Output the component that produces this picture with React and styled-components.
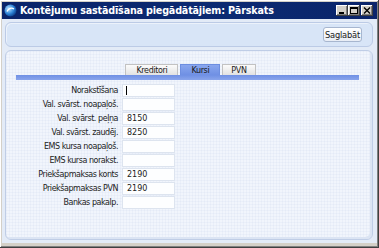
import React from "react";
import styled, { createGlobalStyle } from "styled-components";

const GlobalStyle = createGlobalStyle`
  html, body {
    margin: 0;
    padding: 0;
    background: #d4d0c8;
  }
  * {
    box-sizing: border-box;
  }
`;

const Window = styled.div`
  width: 379px;
  height: 248px;
  display: flex;
  flex-direction: column;
  background: #d4d0c8;
  padding: 2px 2px 5px 2px;
  box-shadow: inset -1px -1px 0 #404040, inset 1px 1px 0 #ffffff,
    inset -2px -2px 0 #808080;
  font-family: "DejaVu Sans", Tahoma, sans-serif;
`;

const TitleBar = styled.div`
  height: 17px;
  display: flex;
  align-items: center;
  padding: 0 2px 0 2px;
  background: linear-gradient(90deg, #0a246a 0%, #0c2a72 60%, #0a246a 100%);
  color: #ffffff;
`;

const TitleText = styled.span`
  flex: 1;
  margin-left: 3px;
  font-family: "DejaVu Sans", Tahoma, sans-serif;
  font-weight: bold;
  font-size: 9.6px;
  letter-spacing: -0.18px;
  white-space: nowrap;
`;

const Controls = styled.div`
  display: flex;
  margin-right: 2px;
`;

const CtrlButton = styled.div`
  width: 12px;
  height: 11px;
  margin-left: ${(p) => (p.$gap ? "1px" : "0")};
  background: #d4d0c8;
  box-shadow: inset -1px -1px 0 #404040, inset 1px 1px 0 #ffffff,
    inset -2px -2px 0 #808080;
  display: flex;
  align-items: center;
  justify-content: center;
`;

const Body = styled.div`
  flex: 1;
  display: flex;
  flex-direction: column;
  gap: 3px;
  padding: 3px 4px 3px 3px;
  background: #e3ebf7;
`;

const TopPanel = styled.div`
  height: 25px;
  display: flex;
  align-items: center;
  justify-content: flex-end;
  padding-right: 10px;
  border: 1px solid #bccbe6;
  border-radius: 6px;
  background: #d8e5f7;
  box-shadow: inset 1px 1px 0 #ecf2fb;
`;

const SaveButton = styled.button`
  width: 39px;
  height: 15px;
  padding: 0;
  border: 1px solid #a7b6cf;
  border-radius: 3px;
  background: linear-gradient(#ffffff, #e8edf5);
  color: #1a1a1a;
  font-family: "DejaVu Sans", Tahoma, sans-serif;
  font-size: 8.3px;
  letter-spacing: -0.2px;
`;

const MainPanel = styled.div`
  flex: 1;
  display: flex;
  flex-direction: column;
  border: 1px solid #bfcde6;
  border-radius: 6px;
  background-color: #f1f5fc;
  background-image: linear-gradient(rgba(200, 212, 235, 0.18) 1px, transparent 1px),
    linear-gradient(90deg, rgba(200, 212, 235, 0.18) 1px, transparent 1px);
  background-size: 3px 3px;
  box-shadow: inset -2px -2px 0 #dbe4f3;
  padding-top: 13px;
`;

const TabStrip = styled.div`
  display: flex;
  justify-content: center;
  gap: 2px;
  padding-left: 3px;
`;

const Tab = styled.div`
  height: 11px;
  padding: 0 ${(p) => p.$pad}px;
  display: flex;
  align-items: center;
  font-family: "DejaVu Sans", Tahoma, sans-serif;
  font-size: 8px;
  letter-spacing: -0.35px;
  color: #1a1a1a;
  border: 1px solid ${(p) => (p.$active ? "#6d8ee0" : "#c2c2c2")};
  border-bottom: none;
  background: ${(p) =>
    p.$active
      ? "linear-gradient(#89a6ee, #6f90e4)"
      : "linear-gradient(#fbfbfb, #e2e2e2)"};
`;

const TabLine = styled.div`
  height: 5px;
  margin: 0 13px 0 10px;
  background: linear-gradient(#6f90e4, #8aa5ec);
`;

const Form = styled.div`
  display: grid;
  grid-template-columns: 112px 53px;
  column-gap: 4px;
  row-gap: 1px;
  margin-top: 4px;
`;

const Label = styled.div`
  height: 13px;
  line-height: 13px;
  text-align: right;
  font-family: "DejaVu Sans", Tahoma, sans-serif;
  font-size: 8px;
  letter-spacing: -0.45px;
  color: #222222;
  white-space: nowrap;
`;

const Field = styled.div`
  height: 13px;
  line-height: 12px;
  padding-left: 4px;
  border: 1px solid #dde4ef;
  background: #fdfeff;
  font-family: "DejaVu Sans", Tahoma, sans-serif;
  font-size: 8px;
  color: #222222;
  display: flex;
  align-items: center;
`;

const Caret = styled.span`
  width: 1px;
  height: 9px;
  background: #000000;
  margin-left: -1px;
`;

const rows = [
  ["Norakstīšana", "", true],
  ["Val. svārst. noapaļoš.", ""],
  ["Val. svārst. peļņa", "8150"],
  ["Val. svārst. zaudēj.", "8250"],
  ["EMS kursa noapaļoš.", ""],
  ["EMS kursa norakst.", ""],
  ["Priekšapmaksas konts", "2190"],
  ["Priekšapmaksas PVN", "2190"],
  ["Bankas pakalp.", ""],
];

function AppIcon() {
  return (
    <svg width="13" height="13" viewBox="0 0 13 13">
      <defs>
        <radialGradient id="ig" cx="0.35" cy="0.35" r="0.7">
          <stop offset="0" stopColor="#bfe3ff" />
          <stop offset="0.6" stopColor="#2f86d8" />
          <stop offset="1" stopColor="#0b3f8c" />
        </radialGradient>
      </defs>
      <circle cx="6.5" cy="6.5" r="6" fill="url(#ig)" />
      <path d="M3 7.5 C4.5 4, 8 3.5, 10 5" stroke="#ffffff" strokeWidth="1.3" fill="none" />
    </svg>
  );
}

export default function App() {
  return (
    <>
      <GlobalStyle />
      <Window>
        <TitleBar>
          <AppIcon />
          <TitleText>Kontējumu sastādīšana piegādātājiem: Pārskats</TitleText>
          <Controls>
            <CtrlButton>
              <svg width="8" height="7" viewBox="0 0 8 7">
                <rect x="1" y="5" width="5" height="2" fill="#000" />
              </svg>
            </CtrlButton>
            <CtrlButton>
              <svg width="8" height="7" viewBox="0 0 8 7">
                <rect x="0.5" y="0.5" width="7" height="6" fill="none" stroke="#000" />
                <rect x="0" y="0" width="8" height="2" fill="#000" />
              </svg>
            </CtrlButton>
            <CtrlButton $gap>
              <svg width="8" height="7" viewBox="0 0 8 7">
                <path d="M1 0.5 L7 6.5 M7 0.5 L1 6.5" stroke="#000" strokeWidth="1.4" />
              </svg>
            </CtrlButton>
          </Controls>
        </TitleBar>
        <Body>
          <TopPanel>
            <SaveButton>Saglabāt</SaveButton>
          </TopPanel>
          <MainPanel>
            <TabStrip>
              <Tab $pad={10}>Kreditori</Tab>
              <Tab $pad={10} $active>Kursi</Tab>
              <Tab $pad={8}>PVN</Tab>
            </TabStrip>
            <TabLine />
            <Form>
              {rows.map(([label, value, focused]) => (
                <React.Fragment key={label}>
                  <Label>{label}</Label>
                  <Field>{focused ? <Caret /> : value}</Field>
                </React.Fragment>
              ))}
            </Form>
          </MainPanel>
        </Body>
      </Window>
    </>
  );
}
